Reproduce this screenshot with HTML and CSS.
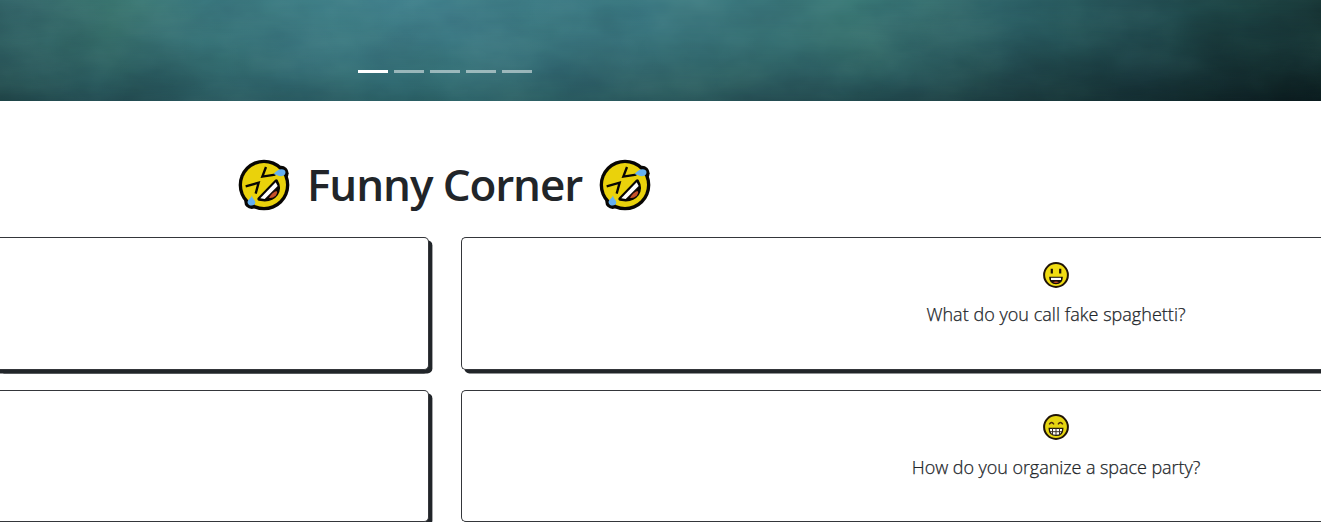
FILE: index.html
```html
<!DOCTYPE html>
<html lang="en">
<head>
<meta charset="utf-8">
<title>Funny Corner</title>
<link rel="stylesheet" href="styles.css">
</head>
<body>
<svg class="symbols" aria-hidden="true">
  <symbol id="rofl" viewBox="24 27 156 156">
    <g fill="#080603">
      <circle cx="102" cy="105" r="76"/>
      <circle cx="153" cy="70" r="23"/>
      <circle cx="65" cy="155" r="22"/>
    </g>
    <circle cx="102" cy="105" r="66" fill="#ead20b"/>
    <path d="M108 51L97 80L136 74M47 109L86 98L77 131" fill="none" stroke="#080603" stroke-width="7"/>
    <path d="M139 93Q151 113 139 133Q126 151 99 149L87 147Z" fill="#160b08" stroke="#080603" stroke-width="10" stroke-linejoin="round"/>
    <path d="M137 97L143 108L104 147L91 145Z" fill="#fff"/>
    <path d="M139 123Q145 127 137 137Q128 146 117 144Q126 128 139 123Z" fill="#c6512a"/>
    <path d="M131 73C139 59 155 53 164 61C171 70 162 79 153 79C145 79 139 73 131 73Z" fill="#66b1f2"/>
    <path d="M66 136C66 145 75 150 76 157C76 169 56 170 53 159C51 150 63 146 66 136Z" fill="#66b1f2"/>
  </symbol>
  <symbol id="grin" viewBox="0 0 26 26">
    <circle cx="13" cy="13" r="11.9" fill="#f0dc12" stroke="#201407" stroke-width="2"/>
    <path d="M8.8 6.8v4.6M17.2 6.8v4.6" stroke="#1c1005" stroke-width="2.2"/>
    <path d="M7 15.6h12q0 5.8-6 5.8T7 15.6Z" fill="#160d08" stroke="#160d08" stroke-width="1.6"/>
    <path d="M8 15.8h10v2.2h-10Z" fill="#fff"/>
    <path d="M10 20.2q3-1.6 6 0-3 1.6-6 0Z" fill="#cf4b28"/>
  </symbol>
  <symbol id="beam" viewBox="0 0 26 26">
    <circle cx="13" cy="13" r="11.9" fill="#e6d511" stroke="#201407" stroke-width="2"/>
    <path d="M6.2 10.4q2.4-3.8 4.8 0M15 10.4q2.4-3.8 4.8 0" fill="none" stroke="#4d2a09" stroke-width="1.4"/>
    <path d="M6.2 14.4h13.6q0 7-6.8 7t-6.8-7Z" fill="#fff" stroke="#21170b" stroke-width="1.3"/>
    <path d="M6.5 17.7h13M9.5 14.4v6M13 14.4v7M16.5 14.4v6" stroke="#3b3029" stroke-width="1"/>
  </symbol>
</svg>
<header class="hero">
  <svg class="clouds" width="1321" height="101" aria-hidden="true">
    <filter id="mist" x="0" y="0" width="100%" height="100%" color-interpolation-filters="sRGB">
      <feTurbulence type="fractalNoise" baseFrequency="0.011 0.02" numOctaves="4" seed="5"/>
      <feColorMatrix values="1 0 0 0 0  0 1 0 0 0  0 0 1 0 0  0 0 0 0 1"/>
      <feColorMatrix type="saturate" values=".15"/>
    </filter>
    <rect width="1321" height="101" filter="url(#mist)"/>
  </svg>
  <div class="indicators"><i class="active"></i><i></i><i></i><i></i><i></i></div>
</header>
<main>
  <h1 class="title"><svg class="rofl"><use href="#rofl"/></svg><span class="title-text">Funny Corner</span><svg class="rofl"><use href="#rofl"/></svg></h1>
  <section class="grid">
    <article class="card cut"></article>
    <article class="card wide"><svg class="face"><use href="#grin"/></svg><p class="joke">What do you call fake spaghetti?</p></article>
    <article class="card cut"></article>
    <article class="card wide second"><svg class="face"><use href="#beam"/></svg><p class="joke">How do you organize a space party?</p></article>
  </section>
</main>
</body>
</html>
```
FILE: styles.css
```css
* { box-sizing: border-box; }
body { margin: 0; height: 522px; overflow: hidden; background: #fff; color: #212529; font-family: "Open Sans", "Noto Sans", sans-serif; }
.symbols { display: none; }
.hero {
  position: relative; isolation: isolate; height: 101px; display: flex; align-items: flex-end; justify-content: flex-start;
  padding: 0 0 28px 358px;
  background: linear-gradient(90deg, #1f4447 0, #265056 100px, #2b5d63 300px, #2e656a 450px, #2a585c 650px, #22494e 870px, #163235 1100px, #0a1a1d 1321px);
}
.hero::before {
  content: ""; position: absolute; inset: 0; z-index: -2;
  background: linear-gradient(90deg, #34676a 0, #39746f 110px, #3c7a80 210px, #42818c 400px, #3c7982 650px, #3b7977 850px, #2f6469 1000px, #235054 1130px, #1b3c3b 1321px);
  mask-image: linear-gradient(#000 0, rgba(0,0,0,.78) 40%, rgba(0,0,0,.4) 72%, transparent 100%);
}
.clouds { position: absolute; left: 0; top: 0; z-index: -1; mix-blend-mode: soft-light; opacity: .28; }
.indicators { display: flex; gap: 6px; }
.indicators i { width: 30px; height: 3px; background: #fff; opacity: .5; }
.indicators .active { opacity: 1; }
.title { margin: 0; padding: 58px 0 0 238px; height: 136px; display: flex; align-items: flex-start; font-size: 44px; line-height: 51px; font-weight: 600; }
.title-text { width: 310px; padding-left: 17px; white-space: nowrap; letter-spacing: -1.1px; }
.rofl { width: 52px; height: 52px; flex: none; }
.title .rofl:last-child { margin-left: -1px; }
.grid { display: grid; grid-template-columns: 429px 1fr; grid-template-rows: 133px 132px; column-gap: 32px; row-gap: 20px; }
.card { border: 1px solid #34363a; border-radius: 5px; box-shadow: 3.4px 3.4px 0 #212529; background: #fff; display: flex; flex-direction: column; align-items: center; padding-top: 24px; }
.card.cut { border-left: 0; border-radius: 0 5px 5px 0; box-shadow: 3.4px 3.4px 0 #212529, 0 3.4px 0 #212529; }
.card.wide { border-right: 0; border-radius: 5px 0 0 5px; padding-left: 329px; }
.card.second { padding-top: 23px; }
.face { width: 26px; height: 26px; }
.joke { margin: 13px 0 0; font-family: "Open Sans", "Noto Sans", sans-serif; font-weight: 300; font-size: 18px; line-height: 27px; letter-spacing: .03px; -webkit-text-stroke: .25px #212529; white-space: nowrap; }
.second .joke { margin-top: 14px; letter-spacing: -.06px; }
```
